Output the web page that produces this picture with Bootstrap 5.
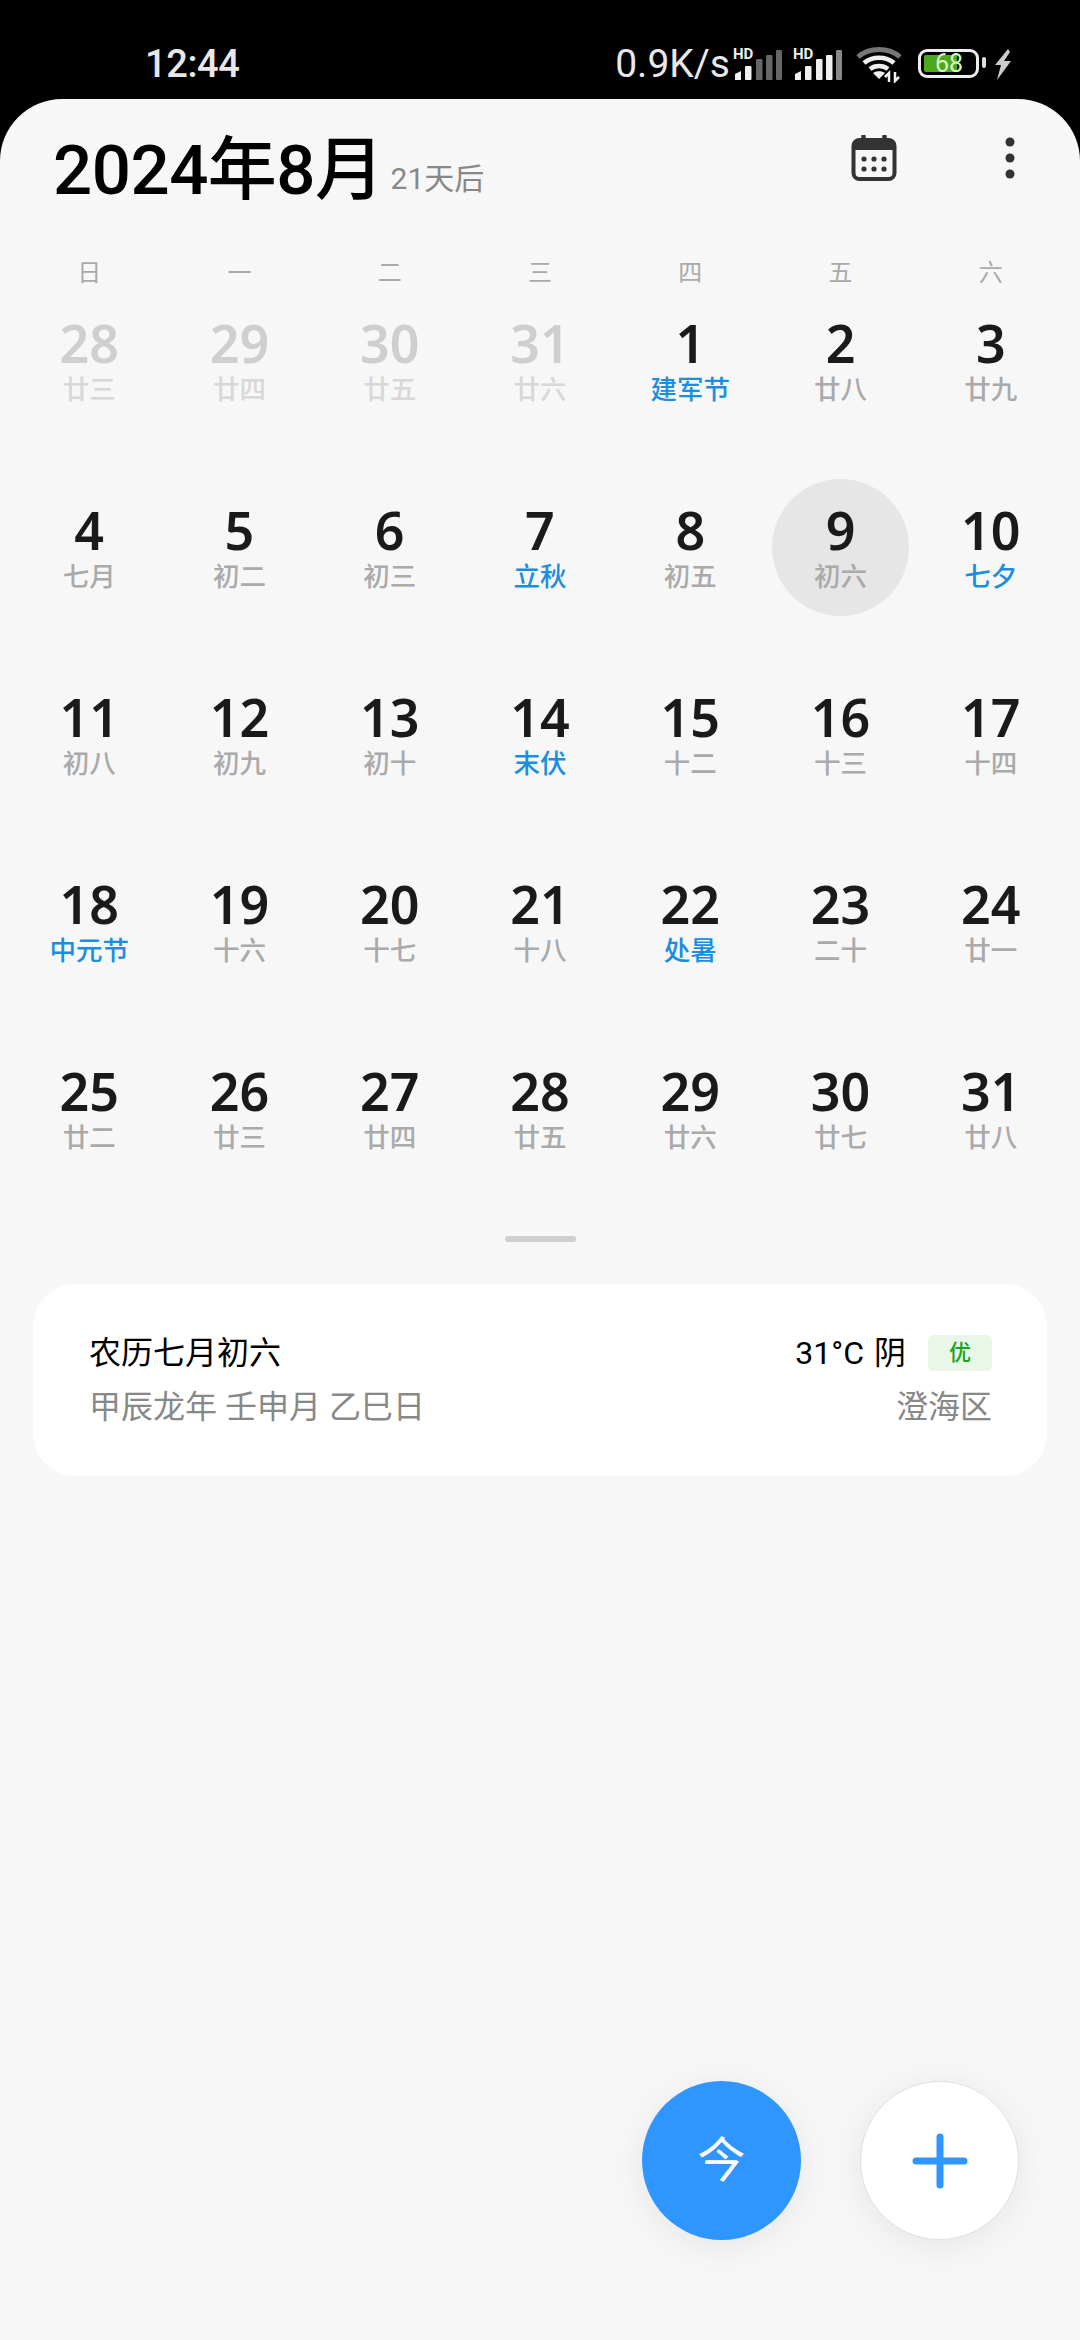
<!DOCTYPE html>
<html lang="zh">
<head>
    <meta charset="UTF-8">
    <meta name="viewport" content="width=device-width, initial-scale=1.0">
    <title>日历</title>
    <link href="https://cdn.jsdelivr.net/npm/bootstrap@5.3.0/dist/css/bootstrap.min.css" rel="stylesheet">
    <style>
        html, body { height: 100%; }
        body { background: #000; font-family: Roboto, "Noto Sans CJK SC", sans-serif; overflow: hidden; }
        .status-bar { height: 99px; color: #e8e8e8; padding: 44px 67px 0 145px; }
        .status-time { font-size: 38px; line-height: 40px; letter-spacing: -.4px; font-weight: 500; }
        .status-speed { font-size: 39px; line-height: 40px; margin-left: auto; margin-right: 1px; }
        .hd-wrap { position: relative; width: 50px; height: 40px; }
        .hd-wrap + .hd-wrap { margin-left: 10px; }
        .hd-wrap span { position: absolute; left: 2px; top: 3px; font: 700 15px/15px Roboto, sans-serif; color: #f0f0f0; }
        .hd-wrap svg { position: absolute; left: 2px; top: 6px; }
        .wifi-icon { margin: 1px 0 0 14px; }
        .batt { width: 61px; height: 29px; border: 3px solid #eee; border-radius: 9px; margin: 5px 0 0 15px; padding: 3px; position: relative; }
        .batt i { display: block; width: 33px; height: 100%; background: #4ea81c; border-radius: 2px 0 0 2px; }
        .batt b { position: absolute; left: 14px; top: -3px; font: 400 25px/29px Roboto, sans-serif; color: #d8f5c0; }
        .bolt-icon { margin-top: 1px; }
        .sheet { height: 2241px; background: #f7f7f7; border-radius: 62px 62px 0 0; position: relative; }
        .cal-head { padding: 30px 65px 0 53px; height: 140px; }
        .cal-title { font-size: 69px; line-height: 84px; font-weight: 500; color: #000; letter-spacing: -.5px; }
        .cal-sub { font-size: 30px; line-height: 42px; color: #888; margin: 0 0 13px 7px; font-weight: 400; letter-spacing: 0; }
        .head-tools { gap: 108px; height: 58px; }
        .week-grid, .day-grid { display: grid; grid-template-columns: repeat(7, 1fr); padding: 0 14px; }
        .week-grid { margin-top: 18px; margin-bottom: 3px; }
        .week-grid div { font-size: 24px; line-height: 32px; color: #aaa; text-align: center; }
        .day-grid { row-gap: 50px; }
        .day-cell { width: 137px; height: 137px; margin: 0 auto; text-align: center; padding-top: 26px; }
        .day-num { font-family: "Noto Sans", sans-serif; font-size: 52px; line-height: 50px; font-weight: 600; color: #1a1a1a; }
        .day-lunar { font-size: 26.5px; line-height: 44px; color: #aaa; font-weight: 500; white-space: nowrap; }
        .is-other .day-num { color: #cfcfcf; }
        .is-other .day-lunar { color: #d8d8d8; }
        .is-fest .day-lunar { color: #1a8fe0; }
        .is-today { background: #e6e6e6; }
        .handle { width: 71px; height: 6px; background: #cfcfcf; border-radius: 3px; margin: 59px auto 0; }
        .info-card { margin: 42px 33px 0; height: 192px; background: #fff; border-radius: 42px; padding: 0 55px 0 56px; }
        .info-row { font-size: 32px; line-height: 54px; }
        .info-main { color: #000; }
        .info-dim { color: #888; }
        .weather-word { margin-left: 10px; }
        .air-tag { width: 64px; height: 36px; background: #e8f7e8; color: #1aa51a; font-size: 22px; border-radius: 5px; font-weight: 500; margin-left: 22px; }
        .fab-wrap { position: absolute; right: 61px; bottom: 100px; gap: 59px; }
        .fab-btn { width: 159px; height: 159px; box-shadow: 0 6px 36px rgba(0, 0, 0, .07); }
        .fab-today { background: #2f96ff; color: #fff; font-size: 48px; }
        .fab-add { background: #fff; border: 1px solid #e0e0e0; }
    </style>
</head>
<body>
    <div class="status-bar d-flex align-items-start">
        <span class="status-time">12:44</span>
        <span class="status-speed">0.9K/s</span>
        <div class="hd-wrap">
            <span>HD</span>
            <svg width="50" height="30" viewBox="0 0 50 30"><g fill="#f0f0f0"><path d="M2 30V24L8 21V30Z"/><rect x="12" y="16" width="6.500" height="14" rx="1"/></g><g fill="#666"><rect x="23" y="9" width="6.500" height="21" rx="1"/><rect x="33" y="5" width="6.500" height="25" rx="1"/><rect x="43" y="0" width="6" height="30" rx="1"/></g></svg>
        </div>
        <div class="hd-wrap">
            <span>HD</span>
            <svg width="50" height="30" viewBox="0 0 50 30"><g fill="#f0f0f0"><path d="M2 30V24L8 21V30Z"/><rect x="12" y="16" width="6.500" height="14" rx="1"/><rect x="23" y="9" width="6.500" height="21" rx="1"/><rect x="33" y="5" width="6.500" height="25" rx="1"/></g><rect x="43" y="0" width="6" height="30" rx="1" fill="#888"/></svg>
        </div>
        <svg class="wifi-icon" width="48" height="38" viewBox="0 0 48 38" fill="none">
            <path d="M3 12C14 2 34 2 45 12" stroke="#777" stroke-width="5"/>
            <path d="M9 18C17 11 31 11 39 18" stroke="#f0f0f0" stroke-width="4.500"/>
            <path d="M15 24C20 20 28 20 33 24" stroke="#f0f0f0" stroke-width="4.500"/>
            <path d="M18 28L24 34L30 28C27 25.500 21 25.500 18 28Z" fill="#f0f0f0"/>
            <path d="M34 37V28L30 32M40 27V36L44 32" stroke="#f0f0f0" stroke-width="2.500"/>
        </svg>
        <div class="batt"><i></i><b>68</b></div>
        <svg class="bolt-icon" width="34" height="38" viewBox="0 0 34 38"><rect x="3" y="12" width="4" height="11" rx="2" fill="#ddd"/><path d="M29 4L16 20H22L18 35L32 16H25L31 7Z" fill="#ccc"/></svg>
    </div>

    <div class="sheet">
        <div class="cal-head d-flex justify-content-between align-items-start">
            <div class="cal-title d-flex">2024年8月<span class="cal-sub align-self-end">21天后</span></div>
            <div class="head-tools d-flex align-items-center">
                <svg width="46" height="46" viewBox="0 0 46 46" fill="none"><rect x="2.500" y="5" width="41" height="39" rx="6" stroke="#333" stroke-width="4"/><path d="M2.500 15H43.500V11Q43.500 5 37 5H9Q2.500 5 2.500 11Z" fill="#333"/><path d="M12.500 1.500V8M33.500 1.500V8" stroke="#333" stroke-width="4.500" stroke-linecap="round"/><g fill="#333"><circle cx="13" cy="24" r="2.600"/><circle cx="23" cy="24" r="2.600"/><circle cx="33" cy="24" r="2.600"/><circle cx="13" cy="34" r="2.600"/><circle cx="23" cy="34" r="2.600"/><circle cx="33" cy="34" r="2.600"/></g></svg>
                <svg width="10" height="42" viewBox="0 0 10 42" fill="#333"><circle cx="5" cy="5" r="4.500"/><circle cx="5" cy="21" r="4.500"/><circle cx="5" cy="37" r="4.500"/></svg>
            </div>
        </div>

        <div class="week-grid"><div>日</div><div>一</div><div>二</div><div>三</div><div>四</div><div>五</div><div>六</div></div>

        <div class="day-grid">
            <div class="day-cell is-other"><div class="day-num">28</div><div class="day-lunar">廿三</div></div>
            <div class="day-cell is-other"><div class="day-num">29</div><div class="day-lunar">廿四</div></div>
            <div class="day-cell is-other"><div class="day-num">30</div><div class="day-lunar">廿五</div></div>
            <div class="day-cell is-other"><div class="day-num">31</div><div class="day-lunar">廿六</div></div>
            <div class="day-cell is-fest"><div class="day-num">1</div><div class="day-lunar">建军节</div></div>
            <div class="day-cell"><div class="day-num">2</div><div class="day-lunar">廿八</div></div>
            <div class="day-cell"><div class="day-num">3</div><div class="day-lunar">廿九</div></div>

            <div class="day-cell"><div class="day-num">4</div><div class="day-lunar">七月</div></div>
            <div class="day-cell"><div class="day-num">5</div><div class="day-lunar">初二</div></div>
            <div class="day-cell"><div class="day-num">6</div><div class="day-lunar">初三</div></div>
            <div class="day-cell is-fest"><div class="day-num">7</div><div class="day-lunar">立秋</div></div>
            <div class="day-cell"><div class="day-num">8</div><div class="day-lunar">初五</div></div>
            <div class="day-cell is-today rounded-circle"><div class="day-num">9</div><div class="day-lunar">初六</div></div>
            <div class="day-cell is-fest"><div class="day-num">10</div><div class="day-lunar">七夕</div></div>

            <div class="day-cell"><div class="day-num">11</div><div class="day-lunar">初八</div></div>
            <div class="day-cell"><div class="day-num">12</div><div class="day-lunar">初九</div></div>
            <div class="day-cell"><div class="day-num">13</div><div class="day-lunar">初十</div></div>
            <div class="day-cell is-fest"><div class="day-num">14</div><div class="day-lunar">末伏</div></div>
            <div class="day-cell"><div class="day-num">15</div><div class="day-lunar">十二</div></div>
            <div class="day-cell"><div class="day-num">16</div><div class="day-lunar">十三</div></div>
            <div class="day-cell"><div class="day-num">17</div><div class="day-lunar">十四</div></div>

            <div class="day-cell is-fest"><div class="day-num">18</div><div class="day-lunar">中元节</div></div>
            <div class="day-cell"><div class="day-num">19</div><div class="day-lunar">十六</div></div>
            <div class="day-cell"><div class="day-num">20</div><div class="day-lunar">十七</div></div>
            <div class="day-cell"><div class="day-num">21</div><div class="day-lunar">十八</div></div>
            <div class="day-cell is-fest"><div class="day-num">22</div><div class="day-lunar">处暑</div></div>
            <div class="day-cell"><div class="day-num">23</div><div class="day-lunar">二十</div></div>
            <div class="day-cell"><div class="day-num">24</div><div class="day-lunar">廿一</div></div>

            <div class="day-cell"><div class="day-num">25</div><div class="day-lunar">廿二</div></div>
            <div class="day-cell"><div class="day-num">26</div><div class="day-lunar">廿三</div></div>
            <div class="day-cell"><div class="day-num">27</div><div class="day-lunar">廿四</div></div>
            <div class="day-cell"><div class="day-num">28</div><div class="day-lunar">廿五</div></div>
            <div class="day-cell"><div class="day-num">29</div><div class="day-lunar">廿六</div></div>
            <div class="day-cell"><div class="day-num">30</div><div class="day-lunar">廿七</div></div>
            <div class="day-cell"><div class="day-num">31</div><div class="day-lunar">廿八</div></div>
        </div>

        <div class="handle"></div>

        <div class="info-card d-flex flex-column justify-content-center">
            <div class="info-row info-main d-flex justify-content-between align-items-center">
                <span>农历七月初六</span>
                <span class="d-flex align-items-center">31°C<span class="weather-word">阴</span><span class="air-tag d-flex align-items-center justify-content-center">优</span></span>
            </div>
            <div class="info-row info-dim d-flex justify-content-between">
                <span>甲辰龙年 壬申月 乙巳日</span>
                <span>澄海区</span>
            </div>
        </div>

        <div class="fab-wrap d-flex">
            <div class="fab-btn fab-today rounded-circle d-flex align-items-center justify-content-center">今</div>
            <div class="fab-btn fab-add rounded-circle d-flex align-items-center justify-content-center">
                <svg width="56" height="56" viewBox="0 0 56 56"><path d="M28 4V52M4 28H52" stroke="#2f96ff" stroke-width="7" stroke-linecap="round"/></svg>
            </div>
        </div>
    </div>

    <script src="https://cdn.jsdelivr.net/npm/bootstrap@5.3.0/dist/js/bootstrap.bundle.min.js"></script>
</body>
</html>
